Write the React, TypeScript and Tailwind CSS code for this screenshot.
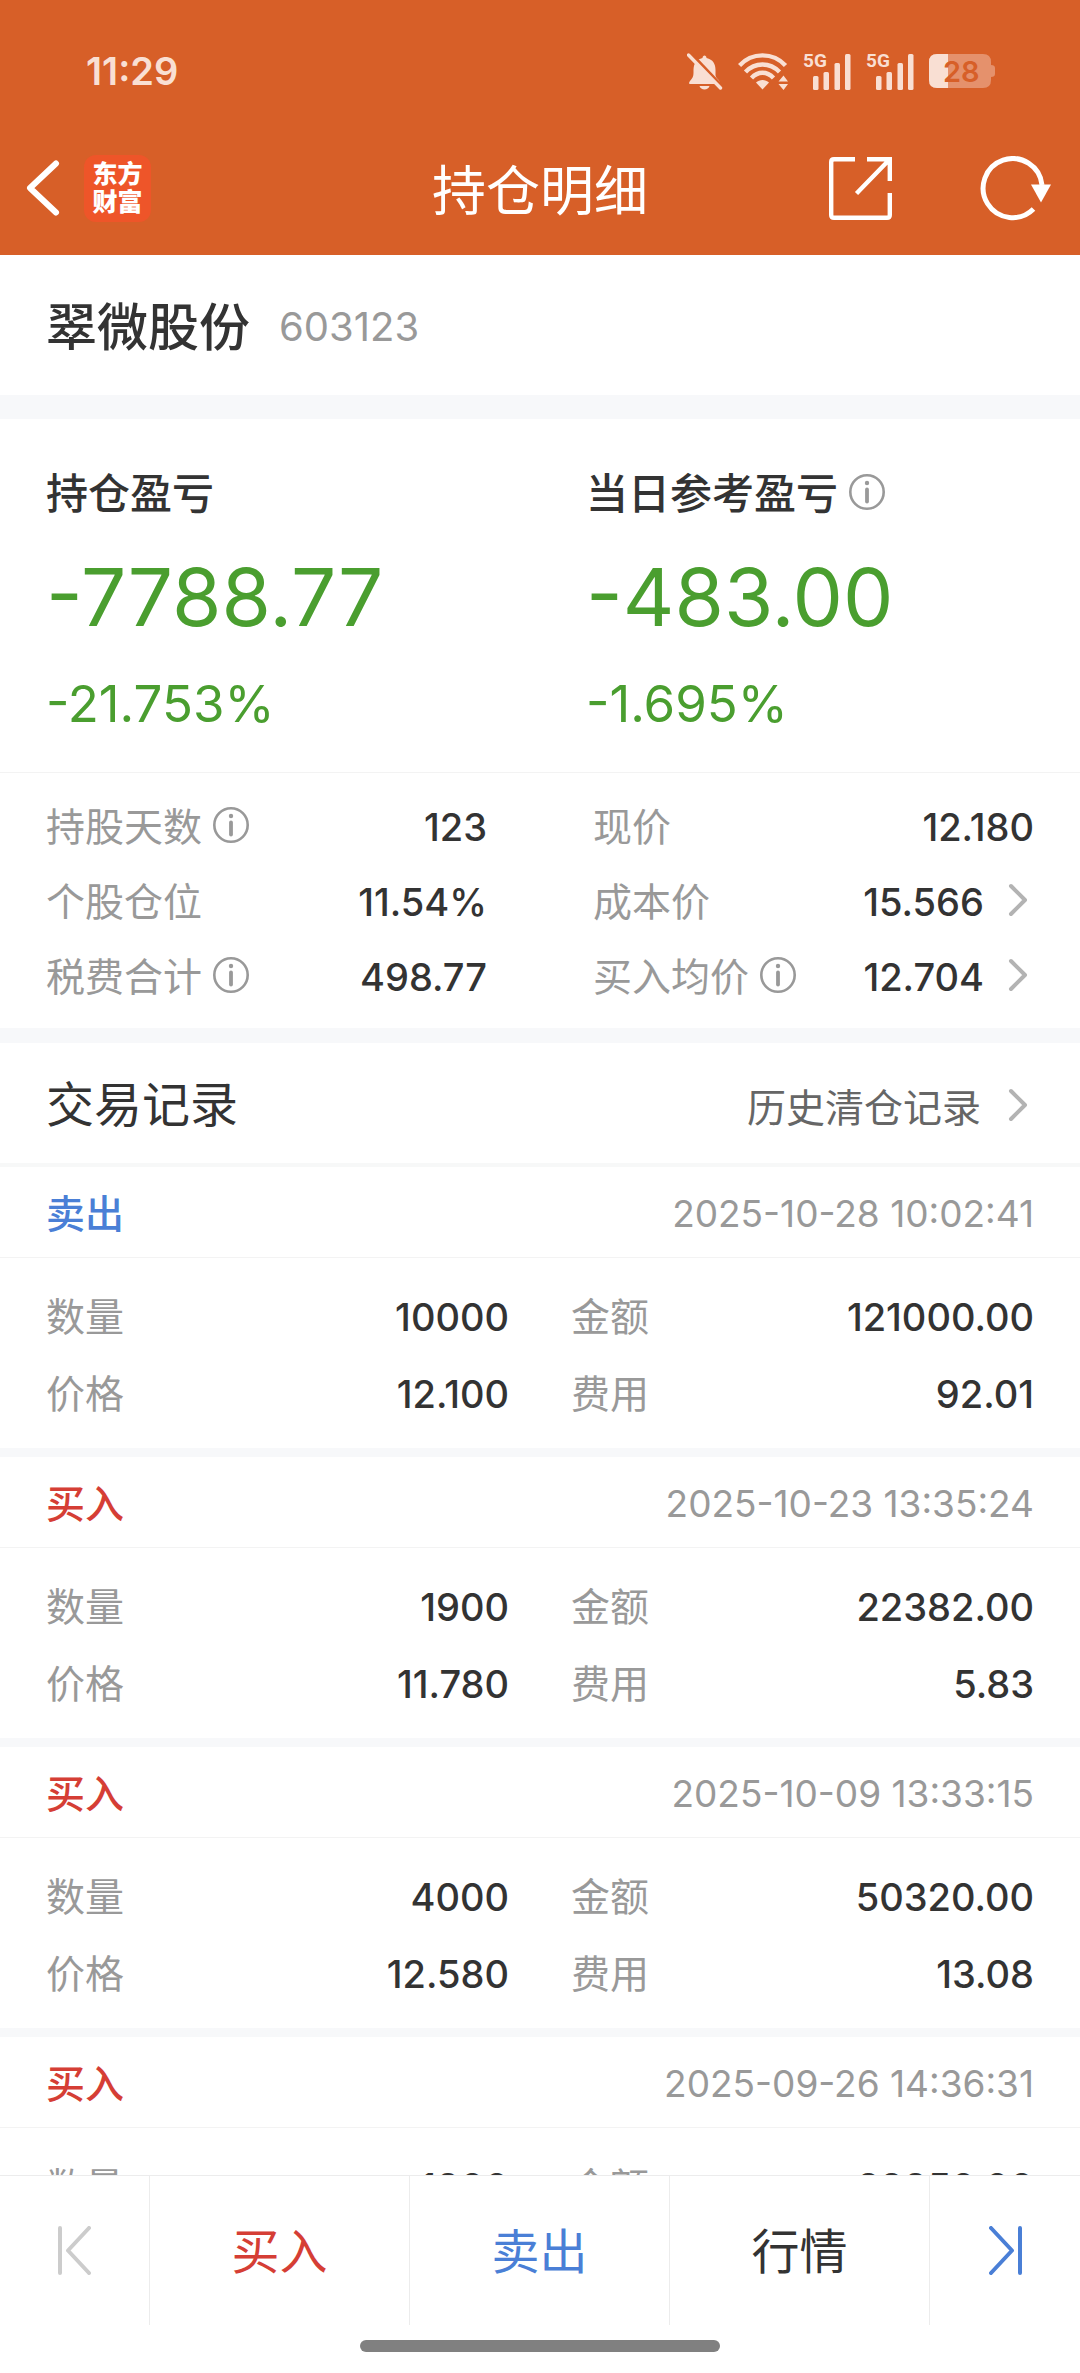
import { ReactNode } from "react";

const trades = [
  { side: "卖出", time: "2025-10-28 10:02:41", count: "10000", amount: "121000.00", price: "12.100", fee: "92.01" },
  { side: "买入", time: "2025-10-23 13:35:24", count: "1900", amount: "22382.00", price: "11.780", fee: "5.83" },
  { side: "买入", time: "2025-10-09 13:33:15", count: "4000", amount: "50320.00", price: "12.580", fee: "13.08" },
  { side: "买入", time: "2025-09-26 14:36:31", count: "1800", amount: "22850.00", price: "12.694", fee: "5.95" },
];

const InfoIcon = () => (
  <svg width="36" height="36" viewBox="0 0 36 36" fill="none" stroke="#999999" className="mb-1 shrink-0">
    <circle cx="18" cy="18" r="16.7" strokeWidth="2.6" />
    <circle cx="18" cy="9" r="2.2" fill="#999999" stroke="none" />
    <path d="M18 15.5V27.5" strokeWidth="3.8" strokeLinecap="round" />
  </svg>
);

const Chevron = () => (
  <svg width="20" height="34" viewBox="0 0 20 34" fill="none" stroke="#b3b3b3" strokeWidth="4" strokeLinecap="round" strokeLinejoin="round" className="mr-1.5 mb-1 shrink-0">
    <path d="M3 3L17 17L3 31" />
  </svg>
);

const Signal = () => (
  <div className="relative h-[37px] w-12">
    <span className="absolute left-0 top-0 font-['Liberation_Sans_Narrow','Roboto'] text-[19px] font-bold leading-[16px]">5G</span>
    <svg width="48" height="37" viewBox="0 0 48 37" fill="currentColor">
      <rect x="10" y="23" width="5.5" height="14" rx="1.5" />
      <rect x="20.5" y="19" width="5.5" height="18" rx="1.5" />
      <rect x="31.5" y="10" width="5.5" height="27" rx="1.5" />
      <rect x="42" y="1" width="5.5" height="36" rx="1.5" />
    </svg>
  </div>
);

const StatusBar = () => (
  <div className="flex h-[121px] items-center justify-between pl-[86px] pr-[85px] pt-[21px] text-[#f9dfd3]">
    <span className="text-[38px] font-semibold leading-none">11:29</span>
    <div className="flex items-center gap-[15px]">
      <svg width="36" height="37" viewBox="0 0 36 37" fill="currentColor">
        <path d="M15.500 5C15.500 1.500 19.500 1.500 19.500 5C26 6.500 28.500 11 28.500 17V22C28.500 25 32 26.500 33 29.500V31H3C1.500 31 2 29 3 28C5.500 25 6.500 23.500 6.500 20V17C6.500 10.500 9.500 6.500 15.500 5Z" />
        <path d="M12.500 33H22.500C21.500 37.500 13.500 37.500 12.500 33Z" />
        <path d="M3 0L37 36" stroke="#d75f28" strokeWidth="4" />
        <path d="M1.500 2L33.500 35" stroke="currentColor" strokeWidth="3.4" strokeLinecap="round" />
      </svg>
      <svg width="50" height="37" viewBox="0 0 50 37" fill="none" stroke="currentColor" strokeWidth="4.4">
        <path d="M1.500 12.500C14 -1 35 -1 47.500 12.500" />
        <path d="M7.500 19C17 9 32 9 41.500 19" />
        <path d="M13.500 25C20 18 29 18 35.500 25" />
        <path d="M18 29.500C21.500 26 27.500 26 31 29.500L24.500 36.500Z" fill="currentColor" stroke="none" />
        <path d="M40.500 28.500L45.500 22.500L50 28.500ZM40.500 31H50L45.500 37Z" fill="currentColor" stroke="none" />
      </svg>
      <Signal />
      <Signal />
      <div className="relative h-[34px] w-[66px]">
        <svg width="66" height="34" viewBox="0 0 66 34">
          <path d="M8 0H54Q62 0 62 8V11Q66 11 66 14V20Q66 23 62 23V26Q62 34 54 34H8Q0 34 0 26V8Q0 0 8 0Z" fill="#e5916c" />
          <path d="M8 0H19V34H8Q0 34 0 26V8Q0 0 8 0Z" fill="currentColor" />
        </svg>
        <span className="absolute left-3.5 top-0 text-[29px] font-semibold leading-[36px] text-[#d75f28]">28</span>
      </div>
    </div>
  </div>
);

const NavBar = () => (
  <div className="grid h-[134px] grid-cols-[1fr_auto_1fr] items-center px-6">
    <div className="flex items-center gap-6">
      <button aria-label="返回">
        <svg width="36" height="58" viewBox="0 0 36 58" fill="none" stroke="white" strokeWidth="6" strokeLinecap="round" strokeLinejoin="round">
          <path d="M32 4.500L6 29L32 53.500" />
        </svg>
      </button>
      <div className="flex size-[67px] flex-col items-center justify-center rounded-xl bg-[#ee5529] text-[25px] font-black leading-[28px]">
        <span>东方</span>
        <span>财富</span>
      </div>
    </div>
    <h1 className="pt-2 text-[54px] leading-none">持仓明细</h1>
    <div className="flex items-center justify-end gap-[88px] pr-1">
      <button aria-label="分享">
        <svg width="63" height="63" viewBox="0 0 63 63" fill="none" stroke="white" strokeWidth="4.4">
          <path d="M26 2.200H5Q2.200 2.200 2.200 5V58Q2.200 60.800 5 60.800H58Q60.800 60.800 60.800 58V36" />
          <path d="M38 2.200H60.800V24M60 3L27.500 36.500" />
        </svg>
      </button>
      <button aria-label="刷新">
        <svg width="72" height="65" viewBox="0 0 72 65" fill="none">
          <path d="M62 29A29.500 29.500 0 1 0 53.500 53" stroke="white" strokeWidth="5" />
          <path d="M51 28.500H71L61 46.500Z" fill="white" />
        </svg>
      </button>
    </div>
  </div>
);

type StatProps = { label: string; value: string; info?: boolean; link?: boolean };

const Stat = ({ label, value, info, link }: StatProps) => (
  <div className="flex h-[75px] items-center justify-between">
    <dt className="flex items-center gap-[11px] text-[39px] text-[#999999]">
      {label}
      {info && <InfoIcon />}
    </dt>
    <dd className="flex items-center gap-6 text-[38px] font-medium">
      {value}
      {link && <Chevron />}
    </dd>
  </div>
);

const Profit = ({ title, value, rate }: { title: ReactNode; value: string; rate: string }) => (
  <div>
    <h2 className="flex h-[62px] items-center gap-[11px] text-[42px] font-medium">{title}</h2>
    <p className="mt-[22px] text-[80px] leading-[100px] text-[#4a9e2f]">{value}</p>
    <p className="mt-6 text-[51px] leading-[66px] text-[#4a9e2f]">{rate}</p>
  </div>
);

const Field = ({ label, value }: { label: string; value: string }) => (
  <div className="flex h-[77px] items-center justify-between">
    <dt className="text-[39px] text-[#999999]">{label}</dt>
    <dd className="text-[38px] font-medium">{value}</dd>
  </div>
);

const App = () => {
  return (
    <div className="flex h-screen flex-col bg-white font-['Inter','Noto_Sans_CJK_SC',sans-serif] leading-none text-[#333333]">
      <header className="shrink-0 bg-[#d75f28] text-white">
        <StatusBar />
        <NavBar />
      </header>

      <main className="min-h-0 flex-1 overflow-y-auto [scrollbar-width:none]">
        <section className="flex h-[140px] items-center gap-[29px] px-[46px] pt-1">
          <h2 className="text-[51px] font-medium">翠微股份</h2>
          <span className="text-[40px] text-[#999999]">603123</span>
        </section>

        <section className="border-t-[24px] border-[#f7f8fa]">
          <div className="grid grid-cols-2 pb-[35px] pt-11 *:px-[46px]">
            <Profit title="持仓盈亏" value="-7788.77" rate="-21.753%" />
            <Profit
              title={
                <>
                  当日参考盈亏
                  <InfoIcon />
                </>
              }
              value="-483.00"
              rate="-1.695%"
            />
          </div>
          <dl className="grid grid-cols-2 gap-x-[106px] border-t border-[#f3f3f3] px-[46px] pb-3.5 pt-4">
            <Stat label="持股天数" value="123" info />
            <Stat label="现价" value="12.180" />
            <Stat label="个股仓位" value="11.54%" />
            <Stat label="成本价" value="15.566" link />
            <Stat label="税费合计" value="498.77" info />
            <Stat label="买入均价" value="12.704" info link />
          </dl>
        </section>

        <section className="border-t-[15px] border-[#f7f8fa]">
          <div className="flex h-[124px] items-center justify-between border-b-4 border-[#f7f8f8] px-[46px] pt-1">
            <h2 className="text-[48px]">交易记录</h2>
            <a href="#history" className="flex items-center gap-[27px] pt-1 text-[39px] text-[#666666]">
              历史清仓记录
              <Chevron />
            </a>
          </div>

          {trades.map((trade) => (
            <article key={trade.time} className="border-b-[9px] border-[#f7f8fa]">
              <div className="flex h-[91px] items-center justify-between border-b border-[#f3f3f3] px-[46px] pt-0.5">
                <h3 className={trade.side === "卖出" ? "text-[39px] font-medium text-[#4a7fd6]" : "text-[39px] font-medium text-[#d53e35]"}>
                  {trade.side}
                </h3>
                <time className="text-[37px] text-[#999999]">{trade.time}</time>
              </div>
              <dl className="grid grid-cols-2 gap-x-[62px] px-[46px] pb-4 pt-5">
                <Field label="数量" value={trade.count} />
                <Field label="金额" value={trade.amount} />
                <Field label="价格" value={trade.price} />
                <Field label="费用" value={trade.fee} />
              </dl>
            </article>
          ))}
        </section>
      </main>

      <footer className="shrink-0 border-t border-[#ececec] bg-white pb-[21px]">
        <nav className="grid h-[149px] grid-cols-[15fr_26fr_26fr_26fr_15fr] divide-x divide-[#ececec] text-[48px]">
          <button aria-label="上一个" className="flex items-center justify-center" disabled>
            <svg width="33" height="49" viewBox="0 0 33 49" fill="none" stroke="#cccccc" strokeWidth="4" strokeLinecap="round" strokeLinejoin="round">
              <path d="M2 2V47M31 2L10 24.500L31 47" />
            </svg>
          </button>
          <button className="pt-0.5 text-[#d53e35]">买入</button>
          <button className="pt-0.5 text-[#4a7fd6]">卖出</button>
          <button className="pt-0.5">行情</button>
          <button aria-label="下一个" className="flex items-center justify-center">
            <svg width="33" height="49" viewBox="0 0 33 49" fill="none" stroke="#4a7fd6" strokeWidth="4" strokeLinecap="round" strokeLinejoin="round">
              <path d="M31 2V47M2 2L23 24.500L2 47" />
            </svg>
          </button>
        </nav>
        <div className="mx-auto mt-[15px] h-3 w-1/3 rounded-full bg-[#808080]" />
      </footer>
    </div>
  );
};

export default App;
